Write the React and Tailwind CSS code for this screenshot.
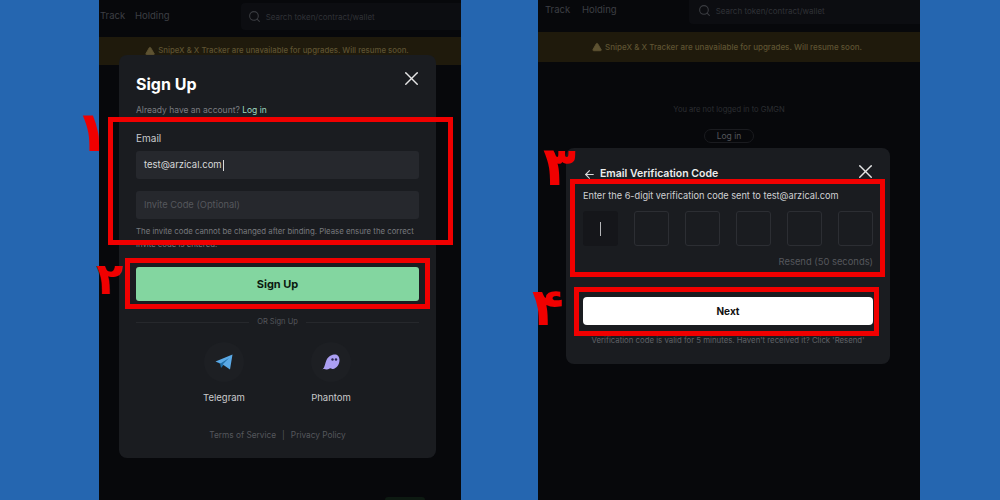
import { ArrowLeft, Search, TriangleAlert, X } from 'lucide-react'

function TopBar({ pad, h, searchLeft, textWidth }) {
  return (
    <div className={`flex items-center text-[9.5px] text-[#3d3f44] ${pad} ${h}`}>
      <span className={textWidth}>Track</span>
      <span>Holding</span>
      <div className={`flex h-[27px] flex-1 items-center gap-[5px] rounded-l bg-[#0c0d11] ${searchLeft}`}>
        <Search size={13} className="text-[#3a3c41]" />
        <span className="text-[8px] text-[#303237]">Search token/contract/wallet</span>
      </div>
    </div>
  )
}

function Banner({ h, size }) {
  return (
    <div className={`flex items-center justify-center gap-[3px] bg-[#1f1a0c] font-medium text-[#5e5332] ${size} ${h}`}>
      <TriangleAlert size={10} className="fill-[#5e5332] text-[#5e5332]" />
      <span>SnipeX &amp; X Tracker are unavailable for upgrades. Will resume soon.</span>
    </div>
  )
}

function RedBox({ className }) {
  return <div className={`absolute border-[5px] border-[#f00000] ${className}`} />
}

function RedNum({ className, children }) {
  return (
    <span className={`absolute font-bold leading-none text-[#f00000] ${className}`} style={{ fontFamily: '"DejaVu Sans", sans-serif' }}>
      {children}
    </span>
  )
}

function TelegramIcon() {
  return (
    <svg width="18" height="16" viewBox="0 0 18 16">
      <path d="M0.5 7.5 17.5 0.5 15 15.5 8.5 11 Z" fill="#5aa9e6" />
      <path d="M0.5 7.5 5.5 9.5 14 4 7.5 10.5 8.5 11 6 14 5 9.5 Z" fill="#1f6ea8" />
    </svg>
  )
}

function PhantomIcon() {
  return (
    <svg width="18" height="17" viewBox="0 0 18 17">
      <path d="M0.5 15.5C3 13 3 9 4.5 6 6.5 2 10 0.5 13 0.5c3 0 4.5 2.5 4.5 5.5 0 5-3.5 8.500-6.500 9-1 0-1.500-.8-2.500-.8-1.500 0-2 1.300-3.500 1.300-1 0-2-.5-4.500-.5Z" fill="#ab9ff2" />
      <circle cx="10.500" cy="5.500" r="1.200" fill="#2a2550" />
      <circle cx="14" cy="5.500" r="1.200" fill="#2a2550" />
    </svg>
  )
}

function SignUpModal() {
  return (
    <div className="absolute left-[20px] top-[55px] flex h-[403px] w-[317px] flex-col rounded-lg bg-[#1a1c20] px-[17px]">
      <X size={23} strokeWidth={1.5} className="absolute right-[13px] top-[12px] text-[#e5e5e5]" />
      <h2 className="pt-[18px] text-[16px] font-bold leading-[22px] text-white">Sign Up</h2>
      <p className="mt-[9px] text-[8.5px] leading-[12px] text-[#7a7c80]">
        Already have an account? <span className="text-[#9fd8c0]">Log in</span>
      </p>
      <label className="mt-[16px] text-[10px] leading-[12px] text-[#c9cacc]">Email</label>
      <div className="mt-[7px] flex h-[28px] items-center rounded-[3px] bg-[#26282d] px-2 text-[9.5px] text-[#d8d9da]">
        test@arzical.com<span className="ml-px h-[11px] w-px bg-[#d8d9da]" />
      </div>
      <div className="mt-[12px] flex h-[28px] items-center rounded-[3px] bg-[#26282d] px-2 text-[9.3px] text-[#55575c]">
        Invite Code (Optional)
      </div>
      <p className="mt-[6px] text-[7.8px] leading-[13px] text-[#77797d]">
        The invite code cannot be changed after binding. Please ensure the correct invite code is entered.
      </p>
      <button className="mt-[16px] h-[34px] rounded-[3px] bg-[#83d6a0] text-[11px] font-bold text-[#0b1a10]">Sign Up</button>
      <div className="mt-[15px] flex items-center gap-2 text-[7.5px] leading-[12px] text-[#55575c]">
        <span className="h-px flex-1 bg-[#26282c]" />
        OR Sign Up
        <span className="h-px flex-1 bg-[#26282c]" />
      </div>
      <div className="mt-[14px] flex justify-center gap-[67px]">
        <div className="flex w-[40px] flex-col items-center">
          <div className="flex size-[40px] items-center justify-center rounded-full bg-[#1d1f23]"><TelegramIcon /></div>
          <span className="mt-[10px] text-[9.5px] leading-[12px] text-[#c9cacc]">Telegram</span>
        </div>
        <div className="flex w-[40px] flex-col items-center">
          <div className="flex size-[40px] items-center justify-center rounded-full bg-[#1d1f23]"><PhantomIcon /></div>
          <span className="mt-[10px] text-[9.5px] leading-[12px] text-[#c9cacc]">Phantom</span>
        </div>
      </div>
      <div className="mt-[25px] flex justify-center gap-[6px] text-[8.3px] leading-[12px] text-[#55575c]">
        <span>Terms of Service</span><span>|</span><span>Privacy Policy</span>
      </div>
    </div>
  )
}

function VerifyModal() {
  return (
    <div className="absolute left-[28px] top-[148px] flex h-[216px] w-[324px] flex-col rounded-lg bg-[#1a1c20] px-[17px]">
      <X size={23} strokeWidth={1.5} className="absolute right-[13px] top-[12px] text-[#e5e5e5]" />
      <div className="flex items-center gap-[4px] pt-[18px]">
        <ArrowLeft size={13} className="text-[#d8d9da]" />
        <h2 className="text-[10.5px] font-semibold leading-[16px] text-[#ededed]">Email Verification Code</h2>
      </div>
      <p className="mt-[7px] text-[9.2px] leading-[14px] text-[#d0d1d3]">Enter the 6-digit verification code sent to test@arzical.com</p>
      <div className="mt-[8px] flex justify-between">
        <div className="flex size-[35px] items-center justify-center rounded-[3px] bg-[#15161a]">
          <span className="h-[14px] w-px bg-[#b5b6b8]" />
        </div>
        {[1, 2, 3, 4, 5].map(i => (
          <div key={i} className="size-[35px] rounded-[3px] border border-[#2c2e33]" />
        ))}
      </div>
      <p className="mt-[10px] text-right text-[9.4px] leading-[12px] text-[#55575c]">Resend (50 seconds)</p>
      <button className="mt-[29px] h-[28px] rounded bg-white text-[10px] font-bold text-[#111]">Next</button>
      <p className="mt-[9px] whitespace-nowrap text-center text-[7.8px] leading-[12px] text-[#5f6166]">Verification code is valid for 5 minutes. Haven't received it? Click 'Resend'</p>
    </div>
  )
}

export default function App() {
  return (
    <div className="relative flex h-[500px] w-[1000px] overflow-hidden bg-[#2566b0]" style={{ fontFamily: 'Inter, sans-serif' }}>
      <div className="relative ml-[99px] flex h-full w-[362px] flex-col overflow-hidden bg-[#07080b]">
        <TopBar pad="pl-[1px] pb-[4px]" h="h-[37px]" searchLeft="ml-[71px] pl-[7px]" textWidth="w-[35px]" />
        <Banner h="h-[28px] pr-[6px]" size="text-[7.8px]" />
        <SignUpModal />
        <div className="absolute bottom-0 right-[36px] h-[3px] w-[40px] rounded-t bg-[#0d1a12]" />
      </div>
      <div className="relative ml-[77px] flex h-full w-[382px] flex-col overflow-hidden bg-[#07080b]">
        <TopBar pad="pl-[7px] pb-[11px]" h="h-[32px]" searchLeft="ml-[72px] pl-[9px]" textWidth="w-[37px]" />
        <Banner h="h-[30px] pr-[4px]" size="text-[8px]" />
        <p className="mt-[42px] text-center text-[7.6px] leading-[12px] text-[#2c2e32]">You are not logged in to GMGN</p>
        <button className="mx-auto mt-[13px] h-[14px] w-[50px] rounded-full border border-[#1a1b1f] text-[8.5px] text-[#55575c]">Log in</button>
        <VerifyModal />
      </div>

      <RedBox className="left-[108px] top-[117px] h-[128px] w-[345px]" />
      <RedBox className="left-[125px] top-[258px] h-[51px] w-[305px]" />
      <RedBox className="left-[570px] top-[179px] h-[98px] w-[315px]" />
      <RedBox className="left-[574px] top-[287px] h-[49px] w-[305px]" />
      <RedNum className="left-[75px] top-[104px] text-[56px]">۱</RedNum>
      <RedNum className="left-[96px] top-[257px] text-[44px]">۲</RedNum>
      <RedNum className="left-[543px] top-[140px] text-[54px]">۳</RedNum>
      <RedNum className="left-[532px] top-[281px] text-[52px]">۴</RedNum>
    </div>
  )
}
